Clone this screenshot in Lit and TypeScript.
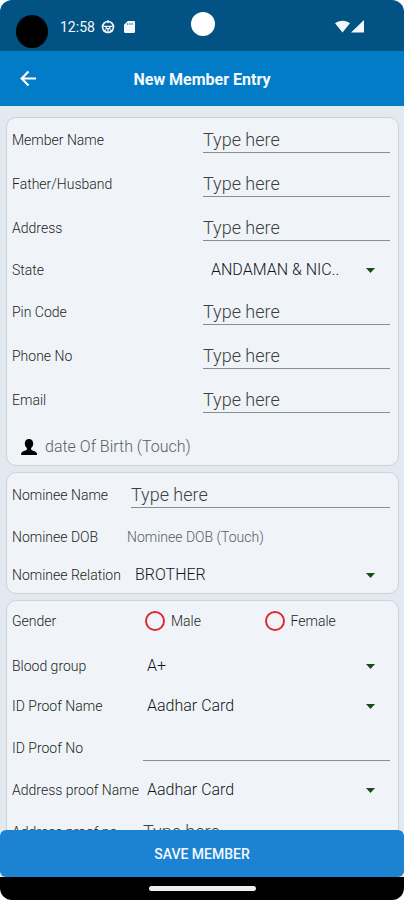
import { LitElement, html, css, svg } from "lit";
import { customElement, property } from "lit/decorators.js";
import { classMap } from "lit/directives/class-map.js";

interface Row {
  kind: "text" | "select" | "touch" | "radio";
  id: string;
  label: string;
  short?: boolean;
  hint?: string;
  options?: string[];
}

interface Section {
  name: string;
  rows: Row[];
}

const HINT = "Type here";

const SECTIONS: Section[] = [
  {
    name: "personal",
    rows: [
      { kind: "text", id: "member-name", label: "Member Name", hint: HINT },
      { kind: "text", id: "father", label: "Father/Husband", hint: HINT },
      { kind: "text", id: "address", label: "Address", hint: HINT },
      { kind: "select", id: "state", label: "State", options: ["ANDAMAN & NIC.."] },
      { kind: "text", id: "pin", label: "Pin Code", hint: HINT },
      { kind: "text", id: "phone", label: "Phone No", hint: HINT },
      { kind: "text", id: "email", label: "Email", hint: HINT },
    ],
  },
  {
    name: "nominee",
    rows: [
      { kind: "text", id: "nominee-name", label: "Nominee Name", hint: HINT },
      { kind: "touch", id: "nominee-dob", label: "Nominee DOB", hint: "Nominee DOB (Touch)" },
      { kind: "select", id: "relation", label: "Nominee Relation", short: true, options: ["BROTHER"] },
    ],
  },
  {
    name: "proof",
    rows: [
      { kind: "radio", id: "gender", label: "Gender", options: ["Male", "Female"] },
      { kind: "select", id: "blood", label: "Blood group", options: ["A+"] },
      { kind: "select", id: "id-proof", label: "ID Proof Name", options: ["Aadhar Card"] },
      { kind: "text", id: "id-proof-no", label: "ID Proof No", hint: "" },
      { kind: "select", id: "address-proof", label: "Address proof Name", options: ["Aadhar Card"] },
      { kind: "text", id: "address-proof-no", label: "Address proof no", hint: HINT },
    ],
  },
];

@customElement("status-bar")
export class StatusBar extends LitElement {
  static styles = css`
    :host {
      display: flex;
      align-items: center;
      justify-content: space-between;
      position: relative;
      flex: none;
      height: 51px;
      box-sizing: border-box;
      padding: 2px 40px 0 60px;
      border-radius: 12px 12px 0 0;
      background: #025384;
      color: #f4f8fb;
    }
    .left {
      display: flex;
      align-items: center;
      gap: 6px;
    }
    .time {
      font-size: 14px;
      font-weight: 400;
      line-height: 20px;
    }
    .right {
      display: flex;
      align-items: center;
      gap: 1px;
    }
    .bubble {
      position: absolute;
      left: 16px;
      top: 15px;
      width: 32px;
      height: 33px;
      border-radius: 50%;
      background: #000;
    }
    .camera {
      position: absolute;
      left: 50%;
      top: 12px;
      width: 24px;
      height: 24px;
      margin-left: -11px;
      border-radius: 50%;
      background: #fff;
    }
    svg {
      display: block;
    }
  `;

  render() {
    return html`
      <span class="bubble"></span>
      <span class="camera"></span>
      <div class="left">
        <span class="time">12:58</span>
        <svg width="14" height="14" viewBox="0 0 14 14" fill="none" stroke="currentColor">
          <circle cx="7" cy="7" r="5.500" stroke-width="1.700" />
          <path d="M1.500 6.300h11M5.200 6.500v2.200h3.600V6.500M7 9v3M7 .2v3M2.700 11.700l2-2M11.300 11.700l-2-2" stroke-width="1.300" />
        </svg>
        <svg width="18" height="14" viewBox="0 0 18 14" fill="currentColor">
          <path d="M6.800 1h6c.7 0 1.200.5 1.200 1.200v9.600c0 .7-.5 1.200-1.200 1.200H4.200C3.500 13 3 12.500 3 11.800V4.800z" />
          <path d="M6.700 3v2M8.900 3v2M11.100 3v2" stroke="#025384" stroke-width=".7" />
        </svg>
      </div>
      <div class="right">
        <svg width="15" height="13" viewBox="0 0 15 13" fill="currentColor">
          <path d="M7.500 12.500 0 3.200C2 1.600 4.600.7 7.500.7s5.500.9 7.500 2.500z" />
        </svg>
        <svg width="13" height="13" viewBox="0 0 13 13" fill="currentColor">
          <path d="M13 0v12.500H0z" />
        </svg>
      </div>
    `;
  }
}

@customElement("form-row")
export class FormRow extends LitElement {
  @property({ attribute: false }) row!: Row;

  static styles = css`
    :host {
      display: block;
    }
    .row {
      display: grid;
      grid-template-columns: var(--label-width) minmax(0, 1fr);
      align-items: center;
      height: 40px;
    }
    .row.text {
      height: 44px;
    }
    .row.short {
      height: 36px;
    }
    .row.radio {
      margin-bottom: 5px;
    }
    .label {
      font-size: 14px;
      font-weight: 300;
      line-height: 20px;
      white-space: nowrap;
      color: #1c1e20;
    }
    input,
    select,
    button {
      font-family: inherit;
      font-weight: 300;
      margin: 0;
      padding: 0;
      border: 0;
      border-radius: 0;
      background: none;
      outline: none;
      appearance: none;
    }
    .field {
      box-sizing: border-box;
      height: 26px;
      margin-left: var(--inset);
      padding-bottom: 1px;
      border-bottom: 1px solid #8b8e91;
      font-size: 18px;
      color: #1c1e20;
      min-width: 0;
    }
    .field::placeholder {
      color: #3c3f42;
      opacity: 1;
    }
    .picker {
      display: grid;
      align-items: center;
    }
    .picker > * {
      grid-area: 1 / 1;
    }
    .choice {
      height: 32px;
      padding: 0 32px 2px 8px;
      font-size: 16px;
      color: #141618;
      min-width: 0;
    }
    .arrow {
      justify-self: end;
      margin-right: 15px;
      pointer-events: none;
    }
    .touch {
      justify-self: start;
      font-size: 14px;
      line-height: 20px;
      color: #5a5d60;
    }
    .options {
      display: grid;
      grid-template-columns: 1fr 1fr;
      padding: 0 6px;
    }
    .option {
      display: flex;
      align-items: center;
      gap: 6px;
    }
    .dot {
      box-sizing: border-box;
      width: 20px;
      height: 20px;
      border: 2px solid #dc2a30;
      border-radius: 50%;
    }
    .dot:checked {
      background: radial-gradient(#dc2a30 5px, transparent 6px);
    }
  `;

  private control() {
    const r = this.row;
    switch (r.kind) {
      case "text":
        return html`<input class="field" id=${r.id} type="text" placeholder=${r.hint ?? ""} />`;
      case "select":
        return html`<div class="picker">
          <select class="choice" id=${r.id}>
            ${r.options?.map((o) => html`<option>${o}</option>`)}
          </select>
          <svg class="arrow" width="9" height="5" viewBox="0 0 9 5">
            <path d="M0 0h9L4.500 5z" fill="#1c4a1c" />
          </svg>
        </div>`;
      case "touch":
        return html`<button class="touch" id=${r.id} type="button">${r.hint}</button>`;
      case "radio":
        return html`<div class="options" role="radiogroup" aria-labelledby=${r.id}>
          ${r.options?.map(
            (o) => html`<label class="option label"
              ><input class="dot" type="radio" name=${r.id} value=${o} />${o}</label
            >`,
          )}
        </div>`;
    }
  }

  render() {
    const r = this.row;
    const classes = { row: true, [r.kind]: r.kind === "text" || r.kind === "radio", short: !!r.short };
    return html`<div class=${classMap(classes)}>
      ${r.kind === "radio"
        ? html`<span class="label" id=${r.id}>${r.label}</span>`
        : html`<label class="label" for=${r.id}>${r.label}</label>`}
      ${this.control()}
    </div>`;
  }
}

const backArrow = svg`<path d="M16 8.500H2M8.500 1.500 1.700 8.500l6.800 7" fill="none" stroke="#fff" stroke-width="2.200" />`;

@customElement("app-root")
export class AppRoot extends LitElement {
  static styles = css`
    :host {
      display: flex;
      flex-direction: column;
      height: 100vh;
      background: #fff;
      font-family: Roboto, "Liberation Sans", sans-serif;
    }
    button {
      font-family: inherit;
      margin: 0;
      padding: 0;
      border: 0;
      background: none;
    }
    svg {
      display: block;
    }
    .bar {
      flex: none;
      display: grid;
      grid-template-columns: 36px 1fr 36px;
      align-items: center;
      height: 55px;
      padding: 0 10px;
      background: #037cc8;
    }
    .back {
      display: flex;
      align-items: center;
      justify-content: center;
      width: 36px;
      height: 36px;
    }
    .title {
      margin: 0;
      padding-top: 2px;
      text-align: center;
      font-size: 16px;
      line-height: 24px;
      font-weight: 700;
      color: #f4f9fd;
    }
    .form {
      flex: 1;
      min-height: 0;
      display: flex;
      flex-direction: column;
      gap: 6px;
      padding: 11px 5px 0 6px;
      overflow-y: auto;
      scrollbar-width: none;
      background: #e2e9f0;
    }
    .card {
      flex: none;
      padding: 0 8px 0 5px;
      border: 1px solid #cdd2d7;
      border-radius: 10px;
      background: #f0f4f9;
    }
    .personal {
      --label-width: 191px;
      --inset: 0px;
    }
    .nominee {
      --label-width: 115px;
      --inset: 4px;
    }
    .proof {
      --label-width: 127px;
      --inset: 4px;
    }
    .birth {
      display: flex;
      align-items: center;
      gap: 8px;
      height: 43px;
      padding: 6px 0 0 9px;
      font-size: 16px;
      font-weight: 300;
      color: #5a5d60;
    }
    .footer {
      flex: none;
      background: #e2e9f0;
    }
    .save {
      display: block;
      width: 100%;
      height: 47px;
      border-radius: 6px;
      background: #1c83d3;
      font-size: 14px;
      font-weight: 500;
      color: #f4f9fd;
    }
    .nav {
      flex: none;
      display: flex;
      align-items: center;
      justify-content: center;
      height: 23px;
      border-radius: 0 0 12px 12px;
      background: #000;
    }
    .pill {
      width: 107px;
      height: 5px;
      border-radius: 3px;
      background: #f0eef0;
    }
  `;

  render() {
    return html`
      <status-bar></status-bar>
      <header class="bar">
        <button class="back" type="button" aria-label="Back">
          <svg width="17" height="17" viewBox="0 0 17 17">${backArrow}</svg>
        </button>
        <h1 class="title">New Member Entry</h1>
      </header>
      <main class="form">
        ${SECTIONS.map(
          (s) => html`<section class="card ${s.name}">
            ${s.rows.map((r) => html`<form-row .row=${r}></form-row>`)}
            ${s.name === "personal"
              ? html`<button class="birth" type="button">
                  <svg width="16" height="16" viewBox="0 0 16 16">
                    <path
                      d="M8 0c2.700 0 4.200 1.800 4.200 4.500 0 2-.9 3.600-2.100 4.600v1.500c.6.9 3.400 1.500 4.700 2.400.8.600 1.200 1.400 1.200 3H0c0-1.600.4-2.400 1.200-3 1.300-.9 4.100-1.500 4.700-2.400V9.100C4.700 8.100 3.800 6.500 3.800 4.500 3.800 1.800 5.300 0 8 0z"
                      fill="#000"
                    />
                  </svg>
                  <span>date Of Birth (Touch)</span>
                </button>`
              : ""}
          </section>`,
        )}
      </main>
      <footer class="footer">
        <button class="save" type="button">SAVE MEMBER</button>
      </footer>
      <div class="nav"><span class="pill"></span></div>
    `;
  }
}
